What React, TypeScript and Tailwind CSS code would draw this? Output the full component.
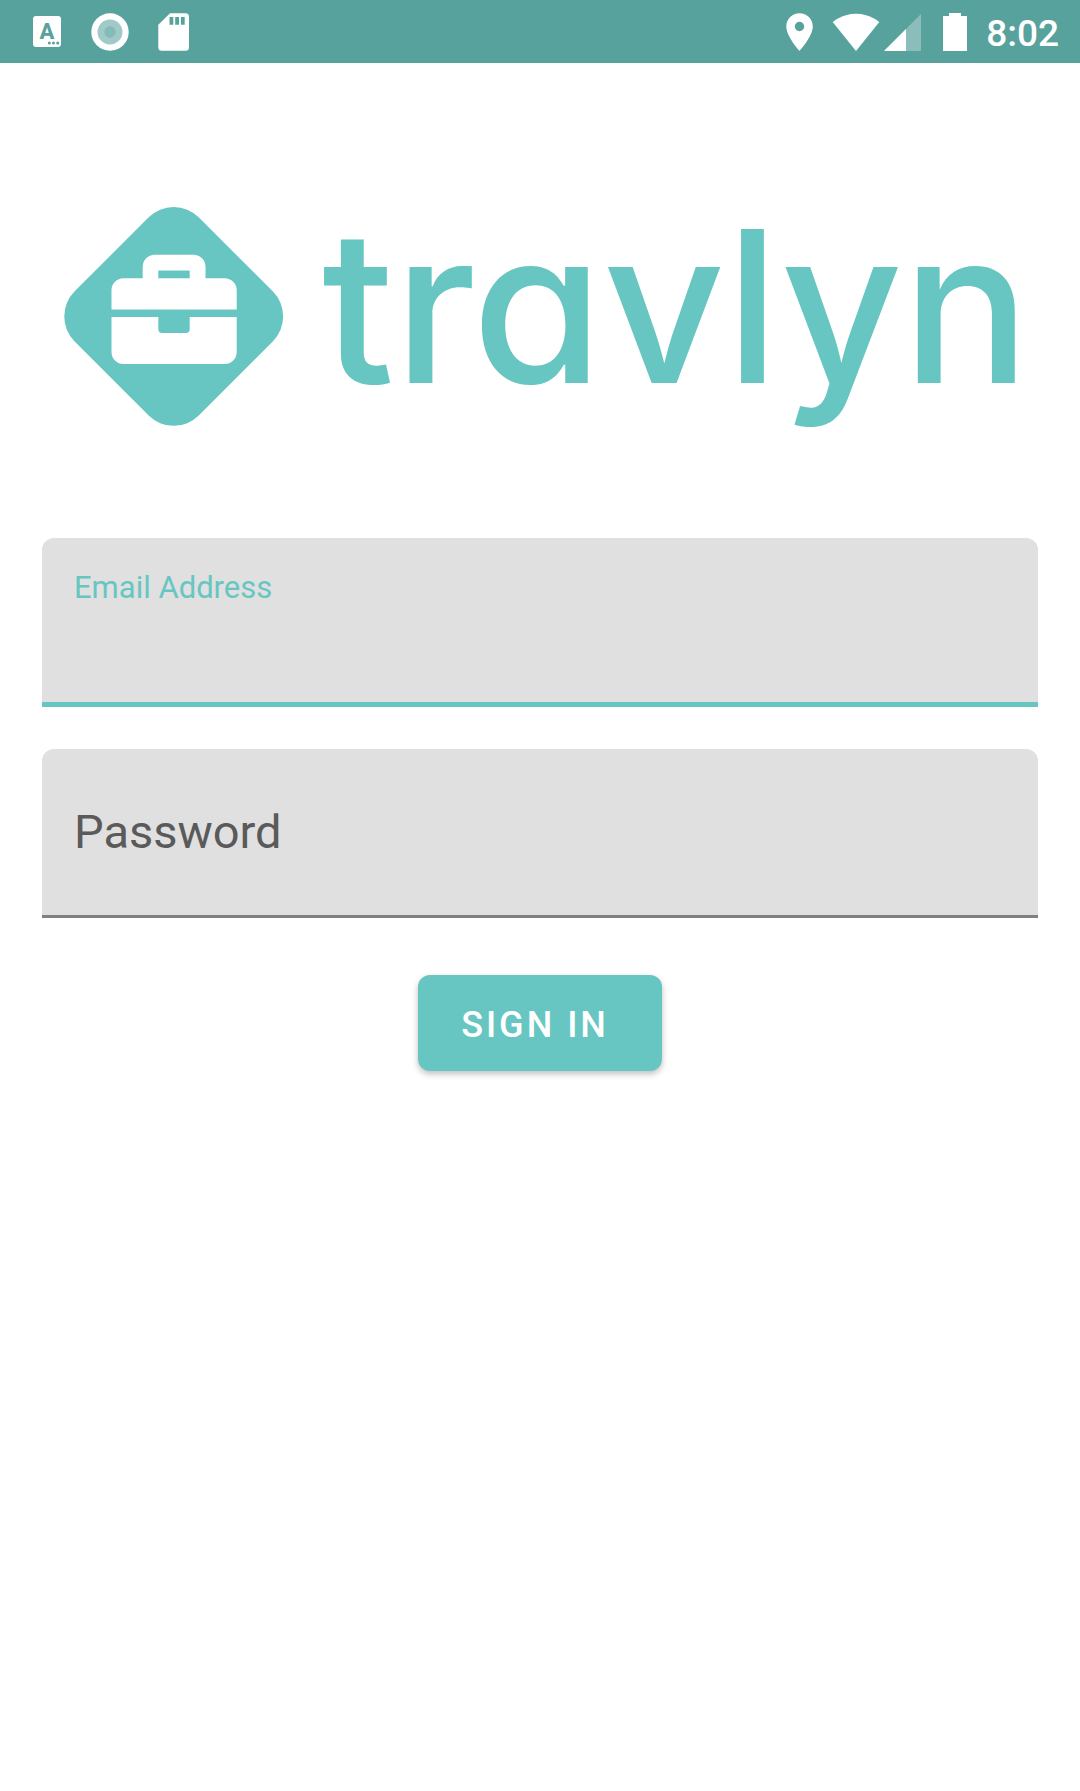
function KeyboardIcon() {
  return (
    <svg viewBox="0 0 28 31" className="h-[31px] w-7" aria-hidden="true">
      <rect width="28" height="31" rx="3" fill="#fff" />
      <text x="14" y="22.500" textAnchor="middle" fontFamily="Roboto, sans-serif" fontSize="22" fontWeight="800" fill="#58a29e">
        A
      </text>
      <circle cx="16.3" cy="27" r="1.5" fill="#58a29e" />
      <circle cx="20.5" cy="27" r="1.5" fill="#58a29e" />
      <circle cx="24.7" cy="27" r="1.5" fill="#58a29e" />
    </svg>
  );
}

function RecordIcon() {
  return (
    <svg viewBox="0 0 38 38" className="size-[38px]" aria-hidden="true">
      <circle cx="19" cy="19" r="18.7" fill="#fff" />
      <circle cx="19" cy="19" r="12.5" fill="#a0cac7" />
      <circle cx="19" cy="19" r="5.7" fill="#84bbb8" />
    </svg>
  );
}

function SdCardIcon() {
  return (
    <svg viewBox="0 0 31 38" className="h-[38px] w-[31px]" aria-hidden="true">
      <path
        fill="#fff"
        fillRule="evenodd"
        d="M12 0.3H27.5Q31 0.3 31 3.8V34.3Q31 37.8 27.5 37.8H3.7Q0.3 37.8 0.3 34.3V11.8ZM11.5 4V11.7H15.3V4ZM17.2 4V11.7H21V4ZM22.9 4V11.7H26.7V4Z"
      />
    </svg>
  );
}

function PinIcon() {
  return (
    <svg viewBox="0 0 28 38" className="h-[38px] w-7" aria-hidden="true">
      <path
        fill="#fff"
        fillRule="evenodd"
        d="M13.5 0.3C6.2 0.3 0.3 6.2 0.3 13.5C0.3 23.3 13.5 38 13.5 38S26.8 23.3 26.8 13.5C26.8 6.2 20.8 0.3 13.5 0.3ZM13.5 18.2A4.7 4.7 0 1 1 13.5 8.8A4.7 4.7 0 1 1 13.5 18.2Z"
      />
    </svg>
  );
}

function WifiIcon() {
  return (
    <svg viewBox="0 0 48 38" className="h-[38px] w-12" aria-hidden="true">
      <path fill="#fff" d="M24 38L47.3 9C46.5 8.300 37.500 0.700 24 0.700S1.500 8.300 0.700 9Z" />
    </svg>
  );
}

function SignalIcon() {
  return (
    <svg viewBox="0 0 37 38" className="h-[38px] w-[37px]" aria-hidden="true">
      <path fill="#8bbebb" d="M0 38L37 1V38Z" />
      <path fill="#fff" d="M0 38L22 16V38Z" />
    </svg>
  );
}

function BatteryIcon() {
  return (
    <svg viewBox="0 0 24 38" className="h-[38px] w-6" aria-hidden="true">
      <path fill="#fff" d="M6 0H18V3H24V38H0V3H6Z" />
    </svg>
  );
}

function StatusBar() {
  return (
    <header className="flex h-[63px] items-center justify-between bg-[#58a29e] pr-[21px] pl-[33px]">
      <div className="flex items-center">
        <KeyboardIcon />
        <div className="ml-[30px]">
          <RecordIcon />
        </div>
        <div className="ml-[29px]">
          <SdCardIcon />
        </div>
      </div>
      <div className="flex items-center">
        <PinIcon />
        <div className="ml-[18px]">
          <WifiIcon />
        </div>
        <div className="ml-1">
          <SignalIcon />
        </div>
        <div className="ml-[22px]">
          <BatteryIcon />
        </div>
        <time className="ml-[19px] pt-1 text-[37px] leading-none font-medium text-white">8:02</time>
      </div>
    </header>
  );
}

function Logo() {
  return (
    <svg viewBox="42 175 996 264" className="w-full" role="img" aria-label="travlyn">
      <rect
        x="-87.750"
        y="-87.750"
        width="175.500"
        height="175.500"
        rx="35.400"
        fill="#68c6c2"
        transform="translate(173.700 316.400) rotate(45)"
      />
      <path
        fill="#fff"
        fillRule="evenodd"
        d="M111.500 309.500V290.300A12 12 0 0 1 123.500 278.300H142.700V266.800A12 12 0 0 1 154.700 254.800H193.500A12 12 0 0 1 205.500 266.800V278.300H224.700A12 12 0 0 1 236.700 290.300V309.500ZM158.300 270.500V278.300H189.700V270.500Z"
      />
      <path
        fill="#fff"
        d="M111.500 317H158.300V329A4 4 0 0 0 162.300 333H185.700A4 4 0 0 0 189.700 329V317H236.700V352A12 12 0 0 1 224.700 364H123.500A12 12 0 0 1 111.500 352Z"
      />
      <text
        x="322"
        y="383"
        fill="#68c6c2"
        fontSize="212"
        fontWeight="500"
        className="font-['Inter',sans-serif] [font-feature-settings:'cv11']"
      >
        travlyn
      </text>
    </svg>
  );
}

export default function App() {
  return (
    <div className="min-h-screen bg-white font-['Roboto',sans-serif]">
      <StatusBar />
      <main className="px-[42px] pt-28">
        <Logo />
        <form className="mt-[99px] flex flex-col" onSubmit={(e) => e.preventDefault()}>
          <div className="flex h-[169px] flex-col rounded-t-xl border-b-5 border-[#68c6c2] bg-[#e0e0e0] px-8 pt-[30px]">
            <label htmlFor="email" className="text-[31px] leading-10 text-[#68c6c2]">
              Email Address
            </label>
            <input id="email" type="email" className="w-full flex-1 text-[47px] text-[#212121] outline-none" />
          </div>
          <div className="mt-[42px] flex h-[169px] rounded-t-xl border-b-3 border-[#808080] bg-[#e0e0e0] px-8">
            <input
              id="password"
              type="password"
              aria-label="Password"
              placeholder="Password"
              className="w-full text-[47px] text-[#212121] outline-none placeholder:text-[#5a5a5a]"
            />
          </div>
          <button
            type="submit"
            className="mt-[57px] h-24 self-center rounded-xl bg-[#68c6c2] pt-1 pr-[53px] pl-[43px] text-[36px] font-medium tracking-[3px] text-white shadow-[0_3px_6px_rgba(0,0,0,0.25)]"
          >
            SIGN IN
          </button>
        </form>
      </main>
    </div>
  );
}
